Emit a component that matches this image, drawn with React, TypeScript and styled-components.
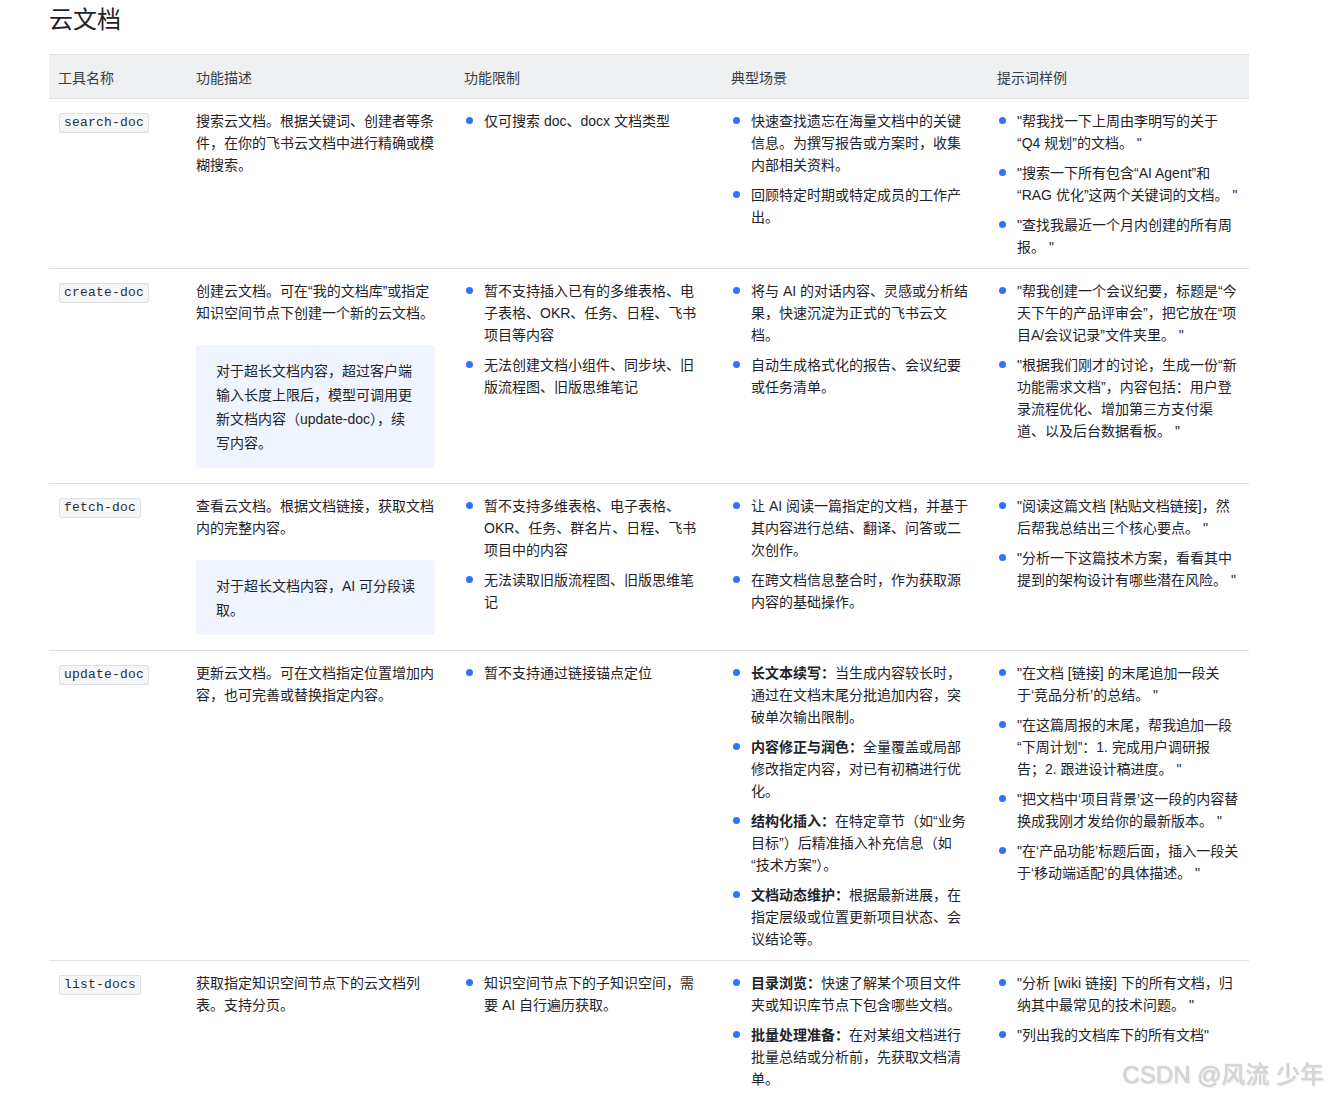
import React from "react";
import styled, { createGlobalStyle } from "styled-components";

const GlobalStyle = createGlobalStyle`
  html, body { margin: 0; padding: 0; background: #ffffff; }
  body {
    font-family: "Liberation Sans", "Noto Sans CJK SC", sans-serif;
    color: #1f2329;
    -webkit-font-smoothing: antialiased;
  }
`;

const Page = styled.div`
  padding: 0 0 40px 49px;
  width: 1200px;
`;

const Title = styled.h2`
  margin: 4px 0 18px 0;
  font-size: 24px;
  line-height: 32px;
  font-weight: 400;
  color: #1f2329;
`;

const Table = styled.div`
  display: grid;
  grid-template-columns: 138px 268px 267px 266px 261px;
  width: 1200px;
  border-top: 1px solid #dee0e3;
`;

const HeadCell = styled.div`
  background: #eff0f1;
  height: 43px;
  display: flex;
  align-items: center;
  padding-left: 9px;
  font-size: 14px;
  color: #373c43;
  border-bottom: 1px solid #dee0e3;
`;

const Cell = styled.div<{ $right?: number }>`
  padding: 11px ${(p) => p.$right ?? 18}px 10px 9px;
  font-size: 14px;
  line-height: 22px;
  color: #1f2329;
  border-bottom: 1px solid #dee0e3;
  min-width: 0;
`;

const Code = styled.code`
  display: inline-block;
  margin: 1px 0 0 1px;
  padding: 0 4px;
  height: 18px;
  line-height: 18px;
  font-family: "Liberation Mono", "DejaVu Sans Mono", monospace;
  font-size: 13px;
  letter-spacing: 0.2px;
  color: #2b2f36;
  background: #f5f6f7;
  border: 1px solid #dee0e3;
  border-radius: 2px;
`;

const Para = styled.p`
  margin: 0;
`;

const Callout = styled.div`
  margin: 21px 0 5px 0;
  padding: 14px 18px 13px 20px;
  background: #f0f4ff;
  border-radius: 4px;
  line-height: 24px;
`;

const List = styled.ul`
  list-style: none;
  margin: 0;
  padding: 0;
  display: flex;
  flex-direction: column;
  gap: 8px;
`;

const Item = styled.li`
  display: flex;
  align-items: flex-start;
  &::before {
    content: "";
    flex-shrink: 0;
    width: 7px;
    height: 7px;
    border-radius: 50%;
    background: #3370ff;
    margin: 7px 11px 0 2px;
  }
`;

const ItemText = styled.span`
  min-width: 0;
`;

const Strong = styled.b`
  font-weight: 700;
`;

const Watermark = styled.div`
  position: fixed;
  right: 6px;
  bottom: 6px;
  font-family: "Liberation Sans", "Noto Sans CJK SC", sans-serif;
  font-size: 24px;
  line-height: 30px;
  color: #d8d8d8;
  text-shadow: 0 0 1px rgba(0, 0, 0, 0.3), 1px 1px 2px rgba(0, 0, 0, 0.12);
  pointer-events: none;
`;

type Entry = string | { label: string; text: string };

type Row = {
  name: string;
  desc: string;
  note?: string;
  limits: Entry[];
  scenes: Entry[];
  prompts: Entry[];
};

const rows: Row[] = [
  {
    name: "search-doc",
    desc: "搜索云文档。根据关键词、创建者等条件，在你的飞书云文档中进行精确或模糊搜索。",
    limits: ["仅可搜索 doc、docx 文档类型"],
    scenes: [
      "快速查找遗忘在海量文档中的关键信息。为撰写报告或方案时，收集内部相关资料。",
      "回顾特定时期或特定成员的工作产出。",
    ],
    prompts: [
      "\"帮我找一下上周由李明写的关于\u200B“Q4 规划”的文档。 \"",
      "\"搜索一下所有包含“AI Agent”和\u200B“RAG 优化”这两个关键词的文档。 \"",
      "\"查找我最近一个月内创建的所有周报。 \"",
    ],
  },
  {
    name: "create-doc",
    desc: "创建云文档。可在“我的文档库”或指定知识空间节点下创建一个新的云文档。",
    note: "对于超长文档内容，超过客户端输入长度上限后，模型可调用更新文档内容（update-doc），续写内容。",
    limits: [
      "暂不支持插入已有的多维表格、电子表格、OKR、任务、日程、飞书项目等内容",
      "无法创建文档小组件、同步块、旧版流程图、旧版思维笔记",
    ],
    scenes: [
      "将与 AI 的对话内容、灵感或分析结果，快速沉淀为正式的飞书云文档。",
      "自动生成格式化的报告、会议纪要或任务清单。",
    ],
    prompts: [
      "\"帮我创建一个会议纪要，标题是“今天下午的产品评审会”，把它放在“项目A/会议记录”文件夹里。 \"",
      "\"根据我们刚才的讨论，生成一份“新功能需求文档”，内容包括：用户登录流程优化、增加第三方支付渠道、以及后台数据看板。 \"",
    ],
  },
  {
    name: "fetch-doc",
    desc: "查看云文档。根据文档链接，获取文档内的完整内容。",
    note: "对于超长文档内容，AI 可分段读取。",
    limits: [
      "暂不支持多维表格、电子表格、OKR、任务、群名片、日程、飞书项目中的内容",
      "无法读取旧版流程图、旧版思维笔记",
    ],
    scenes: [
      "让 AI 阅读一篇指定的文档，并基于其内容进行总结、翻译、问答或二次创作。",
      "在跨文档信息整合时，作为获取源内容的基础操作。",
    ],
    prompts: [
      "\"阅读这篇文档 [粘贴文档链接]，然后帮我总结出三个核心要点。 \"",
      "\"分析一下这篇技术方案，看看其中提到的架构设计有哪些潜在风险。 \"",
    ],
  },
  {
    name: "update-doc",
    desc: "更新云文档。可在文档指定位置增加内容，也可完善或替换指定内容。",
    limits: ["暂不支持通过链接锚点定位"],
    scenes: [
      { label: "长文本续写：", text: "当生成内容较长时，通过在文档末尾分批追加内容，突破单次输出限制。" },
      { label: "内容修正与润色：", text: "全量覆盖或局部修改指定内容，对已有初稿进行优化。" },
      { label: "结构化插入：", text: "在特定章节（如“业务目标”）后精准插入补充信息（如\u200B“技术方案”）。" },
      { label: "文档动态维护：", text: "根据最新进展，在指定层级或位置更新项目状态、会议结论等。" },
    ],
    prompts: [
      "\"在文档 [链接] 的末尾追加一段关于‘竞品分析’的总结。 \"",
      "\"在这篇周报的末尾，帮我追加一段\u200B“下周计划”：1. 完成用户调研报告；\u20602. 跟进设计稿进度。 \"",
      "\"把文档中‘项目背景’这一段的内容替换成我刚才发给你的最新版本。 \"",
      "\"在‘产品功能’标题后面，插入一段关于‘移动端适配’的具体描述。 \"",
    ],
  },
  {
    name: "list-docs",
    desc: "获取指定知识空间节点下的云文档列表。支持分页。",
    limits: ["知识空间节点下的子知识空间，需要 AI 自行遍历获取。"],
    scenes: [
      { label: "目录浏览：", text: "快速了解某个项目文件夹或知识库节点下包含哪些文档。" },
      { label: "批量处理准备：", text: "在对某组文档进行批量总结或分析前，先获取文档清单。" },
    ],
    prompts: [
      "\"分析 [wiki 链接] 下的所有文档，归纳其中最常见的技术问题。 \"",
      "\"列出我的文档库下的所有文档\"",
    ],
  },
];

const headers = ["工具名称", "功能描述", "功能限制", "典型场景", "提示词样例"];

const Bullets: React.FC<{ items: Entry[] }> = ({ items }) => (
  <List>
    {items.map((it, i) => (
      <Item key={i}>
        <ItemText>
          {typeof it === "string" ? (
            it
          ) : (
            <>
              <Strong>{it.label}</Strong>
              {it.text}
            </>
          )}
        </ItemText>
      </Item>
    ))}
  </List>
);

export default function App() {
  return (
    <>
      <GlobalStyle />
      <Page>
        <Title>云文档</Title>
        <Table>
          {headers.map((h) => (
            <HeadCell key={h}>{h}</HeadCell>
          ))}
          {rows.map((r) => (
            <React.Fragment key={r.name}>
              <Cell>
                <Code>{r.name}</Code>
              </Cell>
              <Cell $right={20}>
                <Para>{r.desc}</Para>
                {r.note && <Callout>{r.note}</Callout>}
              </Cell>
              <Cell $right={16}>
                <Bullets items={r.limits} />
              </Cell>
              <Cell $right={19}>
                <Bullets items={r.scenes} />
              </Cell>
              <Cell $right={10}>
                <Bullets items={r.prompts} />
              </Cell>
            </React.Fragment>
          ))}
        </Table>
      </Page>
      <Watermark>CSDN @风流 少年</Watermark>
    </>
  );
}
